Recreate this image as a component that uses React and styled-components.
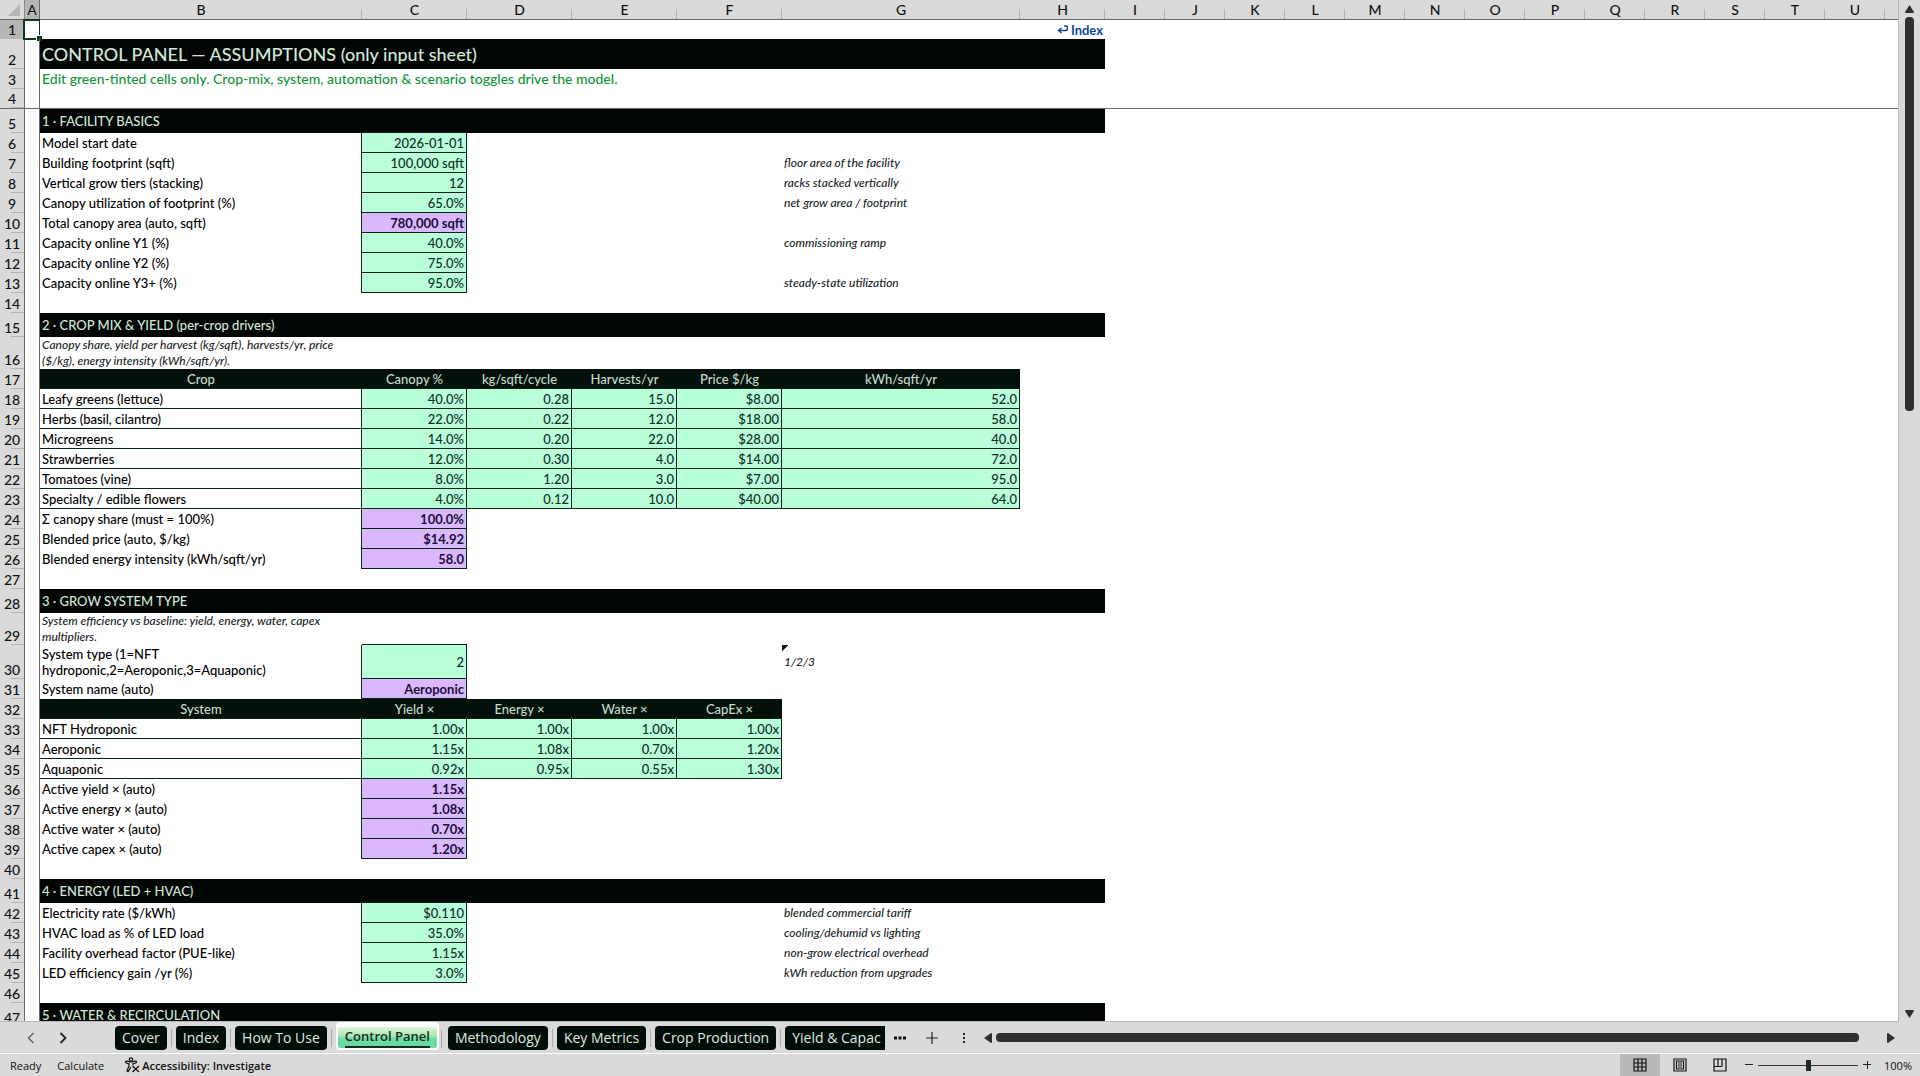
import React from "react";
import styled, { createGlobalStyle, css } from "styled-components";

const COLUMNS = [
  { id: "A", width: 15 },
  { id: "B", width: 322 },
  { id: "C", width: 105 },
  { id: "D", width: 105 },
  { id: "E", width: 105 },
  { id: "F", width: 105 },
  { id: "G", width: 238 },
  { id: "H", width: 85 },
  ..."IJKLMNOPQRSTU".split("").map((id) => ({ id, width: 60 })),
];

// one entry per sheet row
const title = (text) => ({ type: "title", text });
const section = (text) => ({ type: "section", text });
const blank = () => ({ type: "blank" });
const note = (text) => ({ type: "note", text });
const head = (...cells) => ({ type: "head", cells });
const data = (label, ...cells) => ({ type: "data", label, cells });
const input = (label, value, remark, height) => ({
  type: "input",
  label,
  value,
  remark,
  height,
});
const auto = (label, value) => ({ type: "auto", label, value });

const ROWS = [
  { type: "link", height: 19 },
  title("CONTROL PANEL — ASSUMPTIONS (only input sheet)"),
  {
    type: "hint",
    text: "Edit green-tinted cells only. Crop-mix, system, automation & scenario toggles drive the model.",
  },
  { type: "frozen" },
  section("1 · FACILITY BASICS"),
  input("Model start date", "2026-01-01"),
  input("Building footprint (sqft)", "100,000 sqft", "floor area of the facility"),
  input("Vertical grow tiers (stacking)", "12", "racks stacked vertically"),
  input("Canopy utilization of footprint (%)", "65.0%", "net grow area / footprint"),
  auto("Total canopy area (auto, sqft)", "780,000 sqft"),
  input("Capacity online Y1 (%)", "40.0%", "commissioning ramp"),
  input("Capacity online Y2 (%)", "75.0%"),
  input("Capacity online Y3+ (%)", "95.0%", "steady-state utilization"),
  blank(),
  section("2 · CROP MIX & YIELD (per-crop drivers)"),
  note("Canopy share, yield per harvest (kg/sqft), harvests/yr, price ($/kg), energy intensity (kWh/sqft/yr)."),
  head("Crop", "Canopy %", "kg/sqft/cycle", "Harvests/yr", "Price $/kg", "kWh/sqft/yr"),
  data("Leafy greens (lettuce)", "40.0%", "0.28", "15.0", "$8.00", "52.0"),
  data("Herbs (basil, cilantro)", "22.0%", "0.22", "12.0", "$18.00", "58.0"),
  data("Microgreens", "14.0%", "0.20", "22.0", "$28.00", "40.0"),
  data("Strawberries", "12.0%", "0.30", "4.0", "$14.00", "72.0"),
  data("Tomatoes (vine)", "8.0%", "1.20", "3.0", "$7.00", "95.0"),
  data("Specialty / edible flowers", "4.0%", "0.12", "10.0", "$40.00", "64.0"),
  auto("Σ canopy share (must = 100%)", "100.0%"),
  auto("Blended price (auto, $/kg)", "$14.92"),
  auto("Blended energy intensity (kWh/sqft/yr)", "58.0"),
  blank(),
  section("3 · GROW SYSTEM TYPE"),
  note("System efficiency vs baseline: yield, energy, water, capex multipliers."),
  input("System type (1=NFT hydroponic,2=Aeroponic,3=Aquaponic)", "2", "1/2/3", 34),
  auto("System name (auto)", "Aeroponic"),
  head("System", "Yield ×", "Energy ×", "Water ×", "CapEx ×"),
  data("NFT Hydroponic", "1.00x", "1.00x", "1.00x", "1.00x"),
  data("Aeroponic", "1.15x", "1.08x", "0.70x", "1.20x"),
  data("Aquaponic", "0.92x", "0.95x", "0.55x", "1.30x"),
  auto("Active yield × (auto)", "1.15x"),
  auto("Active energy × (auto)", "1.08x"),
  auto("Active water × (auto)", "0.70x"),
  auto("Active capex × (auto)", "1.20x"),
  blank(),
  section("4 · ENERGY (LED + HVAC)"),
  input("Electricity rate ($/kWh)", "$0.110", "blended commercial tariff"),
  input("HVAC load as % of LED load", "35.0%", "cooling/dehumid vs lighting"),
  input("Facility overhead factor (PUE-like)", "1.15x", "non-grow electrical overhead"),
  input("LED efficiency gain /yr (%)", "3.0%", "kWh reduction from upgrades"),
  blank(),
  section("5 · WATER & RECIRCULATION"),
];

const HEIGHTS = { title: 30, section: 24, note: 32 };

const TABS = [
  "Cover",
  "Index",
  "How To Use",
  "Control Panel",
  "Methodology",
  "Key Metrics",
  "Crop Production",
  "Yield & Capac",
];

const RowCells = ({ row }) => {
  switch (row.type) {
    case "link":
      return (
        <>
          <Cell colSpan={6} />
          <Cell $align="right">
            <IndexLink href="#index">
              <ReturnIcon /> Index
            </IndexLink>
          </Cell>
        </>
      );
    case "title":
      return <TitleCell colSpan={7}>{row.text}</TitleCell>;
    case "hint":
      return <HintCell colSpan={7}>{row.text}</HintCell>;
    case "frozen":
      return <Cell colSpan={COLUMNS.length} />;
    case "section":
      return <SectionCell colSpan={7}>{row.text}</SectionCell>;
    case "note":
      return <NoteCell>{row.text}</NoteCell>;
    case "head":
      return row.cells.map((text) => <HeadCell key={text}>{text}</HeadCell>);
    case "data":
      return (
        <>
          <Cell $boxed>{row.label}</Cell>
          {row.cells.map((value, i) => (
            <ValueCell key={i}>{value}</ValueCell>
          ))}
        </>
      );
    case "input":
      return (
        <>
          <Cell>
            <Label>{row.label}</Label>
          </Cell>
          <ValueCell>{row.value}</ValueCell>
          <Cell colSpan={3} />
          <RemarkCell $flag={row.remark === "1/2/3"}>{row.remark}</RemarkCell>
        </>
      );
    case "auto":
      return (
        <>
          <Cell>{row.label}</Cell>
          <ValueCell $auto>{row.value}</ValueCell>
        </>
      );
    default:
      return null;
  }
};

const ReturnIcon = () => (
  <svg width="11" height="9" viewBox="0 0 11 9" fill="none" stroke="currentColor" strokeWidth="1.5">
    <path d="M7 1h1.500a2 2 0 0 1 2 2v.5a2 2 0 0 1-2 2H2M4.500 3L1.500 5.500L4.500 8" />
  </svg>
);

const AccessibilityIcon = () => (
  <svg width="16" height="16" viewBox="0 0 16 16" fill="none" stroke="#111" strokeWidth="1.200">
    <circle cx="7" cy="2.500" r="1.700" />
    <path d="M1.500 4.500C1 5.500 2 6 5 6.800V9L3 13.500c-.3 1 .9 1.500 1.400.6L7 10M1.500 4.500C2.500 3.500 4 5 7 5s4.500-1.500 5.500-.5c.5 1-.5 1.500-3.500 2.300v1.500" />
    <path d="M8.500 9L15 15M15 9L8.500 15" strokeWidth="1.300" />
  </svg>
);

const App = () => {
  return (
    <Window>
      <GlobalStyle />
      <SheetArea>
        <SheetPane>
          <Sheet>
            <colgroup>
              <Col $width={25} />
              {COLUMNS.map((col) => (
                <Col key={col.id} $width={col.width} />
              ))}
              <col />
            </colgroup>
            <thead>
              <tr>
                <Corner>
                  <svg width="12" height="12" viewBox="0 0 12 12">
                    <path d="M12 0V12H0Z" fill="#b4b4b4" />
                  </svg>
                </Corner>
                {COLUMNS.map((col) => (
                  <ColumnHead key={col.id} scope="col" $active={col.id === "A"}>
                    {col.id}
                  </ColumnHead>
                ))}
                <ColumnHead $last />
              </tr>
            </thead>
            <tbody>
              {ROWS.map((row, i) => (
                <Row
                  key={i}
                  $height={row.height || HEIGHTS[row.type] || 20}
                  $frozen={row.type === "frozen"}
                >
                  <RowHead scope="row" $active={i === 0}>
                    {i + 1}
                  </RowHead>
                  <ColumnA>{i === 0 && <Selection />}</ColumnA>
                  <RowCells row={row} />
                </Row>
              ))}
            </tbody>
          </Sheet>
        </SheetPane>
        <VerticalBar>
          <ScrollButton aria-label="Scroll up">
            <svg width="9" height="8" viewBox="0 0 9 8">
              <path d="M4.500 0L9 7Q9 8 8 8H1Q0 8 0 7Z" fill="#303030" />
            </svg>
          </ScrollButton>
          <VerticalTrack>
            <VerticalThumb />
          </VerticalTrack>
          <ScrollButton aria-label="Scroll down">
            <svg width="9" height="8" viewBox="0 0 9 8">
              <path d="M4.500 8L9 1Q9 0 8 0H1Q0 0 0 1Z" fill="#303030" />
            </svg>
          </ScrollButton>
        </VerticalBar>
      </SheetArea>

      <TabBar>
        <TabNav>
          <IconButton aria-label="Previous sheet">
            <svg width="8" height="12" viewBox="0 0 8 12" fill="none" stroke="#666" strokeWidth="1.500">
              <path d="M6.500 1L1.500 6L6.500 11" />
            </svg>
          </IconButton>
          <IconButton aria-label="Next sheet">
            <svg width="8" height="12" viewBox="0 0 8 12" fill="none" stroke="#222" strokeWidth="1.800">
              <path d="M1.500 1L6.500 6L1.500 11" />
            </svg>
          </IconButton>
        </TabNav>
        <Tabs>
          {TABS.map((name) =>
            name === "Control Panel" ? (
              <ActiveTab key={name}>
                <span>{name}</span>
              </ActiveTab>
            ) : (
              <Tab key={name}>{name}</Tab>
            )
          )}
        </Tabs>
        <TabTools>
          <IconButton aria-label="More sheets">
            <svg width="12" height="4" viewBox="0 0 12 4" fill="#111">
              <rect x="0" y="0.500" width="3" height="3" />
              <rect x="4.500" y="0.500" width="3" height="3" />
              <rect x="9" y="0.500" width="3" height="3" />
            </svg>
          </IconButton>
          <IconButton aria-label="New sheet">
            <svg width="12" height="12" viewBox="0 0 12 12" stroke="#222" strokeWidth="1.200">
              <path d="M6 0V12M0 6H12" />
            </svg>
          </IconButton>
          <IconButton aria-label="Resize tabs">
            <svg width="12" height="12" viewBox="0 0 12 12" fill="#222">
              <rect x="5" y="1" width="2" height="2" />
              <rect x="5" y="5" width="2" height="2" />
              <rect x="5" y="9" width="2" height="2" />
            </svg>
          </IconButton>
        </TabTools>
        <HorizontalBar>
          <ScrollButton aria-label="Scroll left">
            <svg width="8" height="10" viewBox="0 0 8 10">
              <path d="M0 5L7 0Q8 0 8 1V9Q8 10 7 10Z" fill="#303030" />
            </svg>
          </ScrollButton>
          <HorizontalThumb />
          <ScrollButton aria-label="Scroll right">
            <svg width="8" height="10" viewBox="0 0 8 10">
              <path d="M8 5L1 0Q0 0 0 1V9Q0 10 1 10Z" fill="#303030" />
            </svg>
          </ScrollButton>
        </HorizontalBar>
      </TabBar>

      <StatusBar>
        <span>Ready</span>
        <span>Calculate</span>
        <AccessButton>
          <AccessibilityIcon />
          Accessibility: Investigate
        </AccessButton>
        <Spacer />
        <ViewButton $active aria-label="Normal view">
          <svg width="14" height="14" viewBox="0 0 14 14" fill="none" stroke="#111" strokeWidth="1.200">
            <path d="M1 1H13V13H1ZM5 1V13M9 1V13M1 5H13M1 9H13" />
          </svg>
        </ViewButton>
        <ViewButton aria-label="Page layout view">
          <svg width="14" height="14" viewBox="0 0 14 14" fill="none" stroke="#111" strokeWidth="1.200">
            <path d="M1 1H13V13H1ZM3.500 3H10.500V11H3.500ZM5 5H9M5 7H9M5 9H9" />
          </svg>
        </ViewButton>
        <ViewButton aria-label="Page break preview">
          <svg width="14" height="14" viewBox="0 0 14 14" fill="none" stroke="#111" strokeWidth="1.200">
            <path d="M1 1H13V13H1ZM5 1V8.500M9 1V8.500M1 8.500H9" />
          </svg>
        </ViewButton>
        <ZoomButton aria-label="Zoom out">
          <svg width="8" height="8" viewBox="0 0 8 8" stroke="#222">
            <path d="M0 3.500H8" />
          </svg>
        </ZoomButton>
        <ZoomSlider type="range" min="10" max="190" defaultValue="100" aria-label="Zoom" />
        <ZoomButton aria-label="Zoom in">
          <svg width="8" height="8" viewBox="0 0 8 8" stroke="#222">
            <path d="M0 3.500H8M4.500 0V8" />
          </svg>
        </ZoomButton>
        <ZoomValue>100%</ZoomValue>
      </StatusBar>
    </Window>
  );
};

const GlobalStyle = createGlobalStyle`
  * {
    box-sizing: border-box;
  }
  body {
    margin: 0;
    overflow: hidden;
  }
  button {
    border: none;
    padding: 0;
    background: none;
    font: inherit;
    color: inherit;
    cursor: pointer;
  }
  svg {
    display: block;
  }
`;
const Window = styled.div`
  display: flex;
  flex-direction: column;
  height: 100vh;
  background-color: #dadada;
  font-family: "Open Sans", "Noto Sans", sans-serif;
  color: #111;
`;
const SheetArea = styled.main`
  display: flex;
  flex: 1;
  min-height: 0;
`;
const SheetPane = styled.div`
  flex: 1;
  min-width: 0;
  overflow: hidden;
  background-color: #fff;
  border-right: 1px solid #b9b9b9;
  border-bottom: 1px solid #b9b9b9;
`;
const Sheet = styled.table`
  width: 100%;
  table-layout: fixed;
  border-collapse: separate;
  border-spacing: 0;
  font-family: Lato, "Open Sans", sans-serif;
  font-size: 13px;
  line-height: 16px;
  font-weight: 500;
  color: #000;
`;
const Col = styled.col`
  width: ${(props) => props.$width}px;
`;
const Corner = styled.th`
  height: 20px;
  padding: 0 4px 3px 0;
  background-color: #dadada;
  border-bottom: 1px solid #6a6a6a;
  border-right: 1px solid #8a8a8a;
  vertical-align: bottom;
  svg {
    margin-left: auto;
  }
`;
const ColumnHead = styled.th`
  padding: 0;
  font-size: 14px;
  line-height: 19px;
  font-weight: 500;
  color: #111;
  background: linear-gradient(#b4b4b4, #b4b4b4) right bottom / 1px 10px no-repeat #dadada;
  border-bottom: 1px solid #6a6a6a;
  ${(props) =>
    props.$active &&
    css`
      background: #b5b5b5;
      border-right: 1px solid #6a6a6a;
    `}
  ${(props) =>
    props.$last &&
    css`
      background: #dadada;
    `}
`;
const Row = styled.tr`
  height: ${(props) => props.$height}px;
  ${(props) =>
    props.$frozen &&
    css`
      > * {
        border-bottom: 1px solid #6a6a6a;
      }
    `}
`;
const RowHead = styled.th`
  padding: 0;
  vertical-align: bottom;
  text-align: center;
  font-size: 14px;
  line-height: 18px;
  font-weight: 500;
  color: #111;
  background: linear-gradient(#b4b4b4, #b4b4b4) right bottom / 13px 1px no-repeat
    ${(props) => (props.$active ? "#b5b5b5" : "#dadada")};
  border-right: 1px solid #6a6a6a;
`;
const ColumnA = styled.td`
  position: relative;
  padding: 0;
  border-right: 1px solid #6a6a6a;
`;
const Selection = styled.div`
  position: absolute;
  inset: -1px -1px -1px -2px;
  border: 2px solid #12351c;
  border-right-width: 1px;
  &::after {
    content: "";
    position: absolute;
    right: -3px;
    bottom: -3px;
    width: 5px;
    height: 5px;
    background-color: #12351c;
    border-top: 1px solid #fff;
    border-left: 1px solid #fff;
  }
`;
const boxed = css`
  border-right: 1px solid #0a2416;
  border-bottom: 1px solid #0a2416;
  box-shadow: -1px 0 0 #0a2416, 0 -1px 0 #0a2416;
`;
const Cell = styled.td`
  padding: 0 2px;
  vertical-align: middle;
  text-align: ${(props) => props.$align || "left"};
  ${(props) => props.$boxed && boxed}
`;
const Label = styled.div`
  max-width: 240px;
`;
const TitleCell = styled(Cell)`
  background-color: #010602;
  color: #d3e6da;
  font-size: 18px;
  line-height: 24px;
`;
const HintCell = styled(Cell)`
  color: #12953a;
  font-size: 14px;
`;
const SectionCell = styled(Cell)`
  background-color: #010602;
  color: #d3e6da;
`;
const NoteCell = styled(Cell)`
  padding-right: 24px;
  font-style: italic;
  font-size: 12px;
  color: #1a261f;
`;
const HeadCell = styled.th`
  padding: 0;
  background-color: #04100a;
  color: #c3dccc;
  font-weight: 500;
`;
const ValueCell = styled(Cell)`
  text-align: right;
  background-color: ${(props) => (props.$auto ? "#d9b8ff" : "#b9ffda")};
  color: ${(props) => (props.$auto ? "#1c0f38" : "#0f2e1e")};
  font-weight: ${(props) => (props.$auto ? 700 : 500)};
  ${boxed}
`;
const RemarkCell = styled(Cell)`
  font-style: italic;
  font-size: 12px;
  color: #1a261f;
  ${(props) =>
    props.$flag &&
    css`
      background: linear-gradient(135deg, #0b2412 50%, transparent 50%) left top / 7px 7px no-repeat;
    `}
`;
const IndexLink = styled.a`
  display: inline-flex;
  align-items: center;
  gap: 3px;
  color: #0d47a1;
  font-weight: 700;
  text-decoration: none;
`;
const VerticalBar = styled.div`
  display: flex;
  flex-direction: column;
  align-items: center;
  width: 21px;
  padding: 5px 0 4px;
`;
const ScrollButton = styled.button`
  flex: none;
`;
const VerticalTrack = styled.div`
  flex: 1;
  padding: 4px 0 8px;
`;
const VerticalThumb = styled.div`
  width: 9px;
  height: 40%;
  border-radius: 4px;
  background-color: #303030;
`;
const TabBar = styled.nav`
  display: flex;
  align-items: center;
  height: 32px;
  border-bottom: 1px solid #fff;
`;
const TabNav = styled.div`
  display: flex;
  gap: 24px;
  width: 111px;
  padding-left: 27px;
`;
const IconButton = styled.button`
  display: flex;
  align-items: center;
  justify-content: center;
`;
const Tabs = styled.div`
  display: flex;
  align-items: center;
  width: 774px;
  height: 100%;
  overflow: hidden;
`;
const Tab = styled.button`
  position: relative;
  flex: none;
  height: 24px;
  margin: 0 5px 0 4px;
  padding: 0 7px;
  border-radius: 4px;
  background-color: #020d07;
  color: #dcebe2;
  font-size: 14px;
  &::after {
    content: "";
    position: absolute;
    top: 3px;
    right: -5px;
    width: 1px;
    height: 18px;
    background-color: #aaa;
  }
`;
const ActiveTab = styled(Tab)`
  align-self: flex-start;
  height: 28px;
  border: 2px solid #fff;
  border-top: 5px solid #fff;
  background: linear-gradient(#dcf8d8, #a9e0ae 45%, #6bdca4 55%, #6bd8a0);
  color: #10301c;
  font-size: 13px;
  font-weight: 600;
  span {
    display: block;
    height: 20px;
    line-height: 16px;
    border-bottom: 2px solid #10301c;
  }
`;
const TabTools = styled.div`
  display: flex;
  gap: 20px;
  padding: 0 14px 0 9px;
`;
const HorizontalBar = styled.div`
  display: flex;
  flex: 1;
  align-items: center;
  padding-right: 25px;
`;
const HorizontalThumb = styled.div`
  flex: 1;
  height: 9px;
  margin: 0 28px 0 4px;
  border-radius: 4px;
  background-color: #303030;
`;
const StatusBar = styled.footer`
  display: flex;
  align-items: center;
  height: 22px;
  padding: 0 8px 0 10px;
  font-size: 11px;
  span + span {
    margin-left: 16px;
  }
`;
const AccessButton = styled.button`
  display: flex;
  align-items: center;
  gap: 2px;
  margin-left: 20px;
  font-weight: 600;
`;
const Spacer = styled.div`
  flex: 1;
`;
const ViewButton = styled.button`
  display: flex;
  align-items: center;
  justify-content: center;
  width: 40px;
  height: 100%;
  background-color: ${(props) => (props.$active ? "#b9b9b9" : "transparent")};
`;
const ZoomButton = styled.button`
  margin: 0 5px;
`;
const ZoomSlider = styled.input`
  appearance: none;
  width: 100px;
  height: 12px;
  margin: 0;
  background: linear-gradient(#333, #333) center / 100% 1px no-repeat;
  &::-webkit-slider-thumb {
    appearance: none;
    width: 5px;
    height: 11px;
    background-color: #1e2a25;
  }
`;
const ZoomValue = styled.output`
  width: 28px;
  margin-left: 8px;
  text-align: right;
`;
export default App;
